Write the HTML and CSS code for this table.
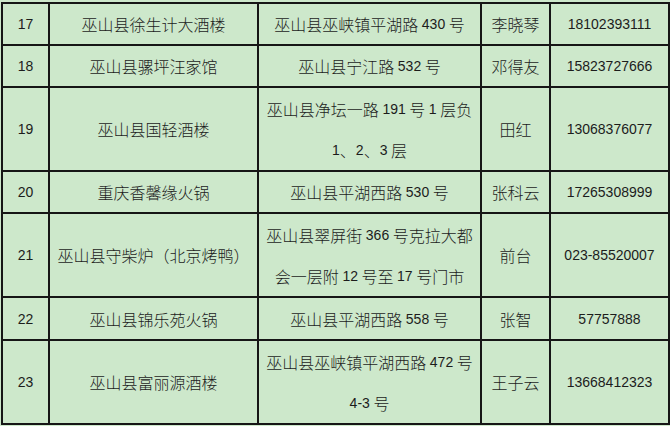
FILE: index.html
```html
<!DOCTYPE html>
<html lang="zh-CN">
<head>
<meta charset="utf-8">
<title>巫山县餐饮名录</title>
<link rel="stylesheet" href="styles.css">
</head>
<body>
<table class="list">
  <colgroup>
    <col class="c-no"><col class="c-name"><col class="c-addr"><col class="c-person"><col class="c-tel">
  </colgroup>
  <tbody>
    <tr>
      <td><div class="ln"><span class="n">17</span></div></td>
      <td><div class="ln">巫山县徐生计大酒楼</div></td>
      <td><div class="ln">巫山县巫峡镇平湖路&nbsp;<span class="n">430</span>&nbsp;号</div></td>
      <td><div class="ln">李晓琴</div></td>
      <td><div class="ln"><span class="n">18102393111</span></div></td>
    </tr>
    <tr>
      <td><div class="ln"><span class="n">18</span></div></td>
      <td><div class="ln">巫山县骡坪汪家馆</div></td>
      <td><div class="ln">巫山县宁江路&nbsp;<span class="n">532</span>&nbsp;号</div></td>
      <td><div class="ln">邓得友</div></td>
      <td><div class="ln"><span class="n">15823727666</span></div></td>
    </tr>
    <tr class="two">
      <td><div class="ln"><span class="n">19</span></div></td>
      <td><div class="ln">巫山县国轻酒楼</div></td>
      <td><div class="ln">巫山县净坛一路&nbsp;<span class="n">191</span>&nbsp;号&nbsp;<span class="n">1</span>&nbsp;层负</div><div class="ln"><span class="n">1</span>、<span class="n">2</span>、<span class="n">3</span>&nbsp;层</div></td>
      <td><div class="ln">田红</div></td>
      <td><div class="ln"><span class="n">13068376077</span></div></td>
    </tr>
    <tr>
      <td><div class="ln"><span class="n">20</span></div></td>
      <td><div class="ln">重庆香馨缘火锅</div></td>
      <td><div class="ln">巫山县平湖西路&nbsp;<span class="n">530</span>&nbsp;号</div></td>
      <td><div class="ln">张科云</div></td>
      <td><div class="ln"><span class="n">17265308999</span></div></td>
    </tr>
    <tr class="two">
      <td><div class="ln"><span class="n">21</span></div></td>
      <td><div class="ln">巫山县守柴炉（北京烤鸭）</div></td>
      <td><div class="ln">巫山县翠屏街&nbsp;<span class="n">366</span>&nbsp;号克拉大都</div><div class="ln">会一层附&nbsp;<span class="n">12</span>&nbsp;号至&nbsp;<span class="n">17</span>&nbsp;号门市</div></td>
      <td><div class="ln">前台</div></td>
      <td><div class="ln"><span class="n">023-85520007</span></div></td>
    </tr>
    <tr class="tall">
      <td><div class="ln"><span class="n">22</span></div></td>
      <td><div class="ln">巫山县锦乐苑火锅</div></td>
      <td><div class="ln">巫山县平湖西路&nbsp;<span class="n">558</span>&nbsp;号</div></td>
      <td><div class="ln">张智</div></td>
      <td><div class="ln"><span class="n">57757888</span></div></td>
    </tr>
    <tr class="two">
      <td><div class="ln"><span class="n">23</span></div></td>
      <td><div class="ln">巫山县富丽源酒楼</div></td>
      <td><div class="ln">巫山县巫峡镇平湖西路&nbsp;<span class="n">472</span>&nbsp;号</div><div class="ln"><span class="n">4-3</span>&nbsp;号</div></td>
      <td><div class="ln">王子云</div></td>
      <td><div class="ln"><span class="n">13668412323</span></div></td>
    </tr>
  </tbody>
</table>
</body>
</html>
```

FILE: styles.css
```css
html, body {
  margin: 0;
  padding: 0;
  background: #cde8cb;
}
body {
  width: 670px;
  height: 426px;
  overflow: hidden;
  padding-top: 2px;
  padding-left: 1px;
  box-sizing: border-box;
}
.list {
  border-collapse: collapse;
  table-layout: fixed;
  width: 667px;
  font-family: "Noto Sans CJK SC", "Noto Sans", sans-serif;
  font-weight: 300;
  font-size: 16px;
  color: #1c1c1c;
}
.c-no { width: 47px; }
.c-name { width: 209px; }
.c-addr { width: 223px; }
.c-person { width: 69px; }
.c-tel { width: 119px; }
.list td {
  border: 2px solid #161616;
  padding: 0;
  text-align: center;
  vertical-align: middle;
  white-space: nowrap;
}
.ln {
  height: 40px;
  display: flex;
  align-items: center;
  justify-content: center;
  overflow: hidden;
}
.two .ln {
  height: 41px;
}
.tall .ln {
  height: 41px;
}
.n {
  font-family: "Liberation Sans", Arial, sans-serif;
  font-size: 14px;
  font-weight: 400;
}
```
